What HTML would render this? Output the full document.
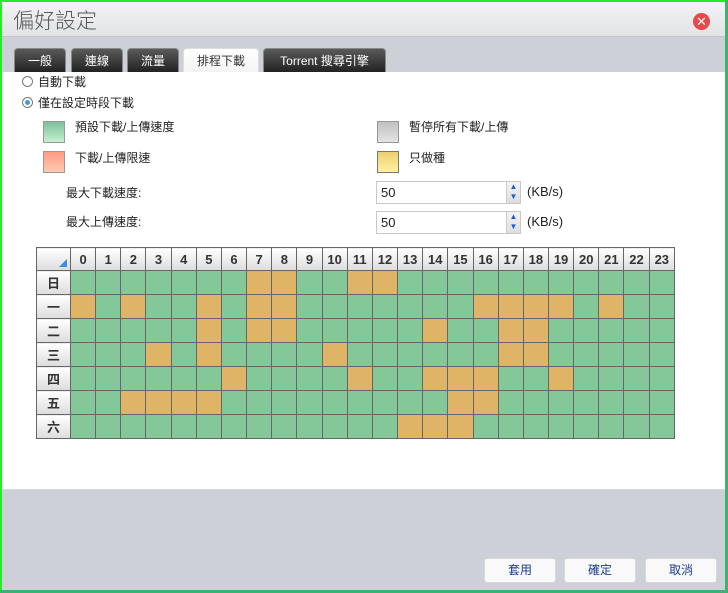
<!DOCTYPE html>
<html><head><meta charset="utf-8">
<style>
*{margin:0;padding:0;box-sizing:border-box}
body{width:728px;height:593px;overflow:hidden;position:relative;background:#fff;font-family:"Liberation Sans","Noto Sans CJK TC",sans-serif;font-size:12px;color:#222}
.abs{position:absolute}
#title{left:0;top:0;width:728px;height:37px;background:linear-gradient(#f4f4f6,#e2e3e6);border-bottom:1px solid #c4c6cb}
#title span{position:absolute;left:13px;top:5px;font-size:21px;color:#555;font-family:"Noto Sans CJK TC",sans-serif;font-weight:300}
#close{left:693px;top:13px;width:17px;height:17px;border-radius:50%;background:#e84848;color:#fff;font-size:13px;line-height:17px;text-align:center}
#band{left:0;top:37px;width:728px;height:35px;background:#cdd0d7}
.tab{position:absolute;top:48px;height:24px;border-radius:4px 4px 0 0;background:linear-gradient(#5a5a5a,#222);color:#fff;font-size:12px;text-align:center;line-height:24px;border:1px solid #888;border-bottom:none}
.tab.act{background:linear-gradient(#fff,#f4f4f4);color:#333;border-color:#ddd}
#foot{left:0;top:489px;width:728px;height:104px;background:#cdd0d7;border-top:1px solid #d8dade}
.btn{position:absolute;top:558px;width:72px;height:25px;background:#f9f9fa;border:1px solid #d6d8dc;border-radius:3px;color:#1a3a8a;text-align:center;line-height:23px;font-size:12px}
.radio{position:absolute;width:11px;height:11px;border:1px solid #777;border-radius:50%;background:#fff}
.radio.on::after{content:"";position:absolute;left:2px;top:2px;width:5px;height:5px;border-radius:50%;background:#3a9ae8}
.txt{position:absolute;font-size:12px;white-space:nowrap}
.sw{position:absolute;width:22px;height:22px;border:1px solid #999}
.inp{position:absolute;width:145px;height:23px;border:1px solid #c8c8c8;background:#fff;font-size:13px;padding-left:4px;line-height:21px}
.spin{position:absolute;right:0;top:0;width:14px;height:21px;background:linear-gradient(#f4f4f4,#ddd);border-left:1px solid #ccc;color:#1f5fd0;font-size:8px;line-height:10px;text-align:center}
#grid{position:absolute;left:36px;top:247px;border-collapse:collapse;table-layout:fixed;width:639px}
#grid td{border:1px solid #666;height:24px;padding:0}
#grid tr:first-child td{height:23px}
#grid .h{background:linear-gradient(#fff,#dcdcdc);font-weight:bold;text-align:center;color:#333;font-size:13px}
#grid .g{background:#84c89a}
#grid .o{background:#e0b466}
#lb{left:0;top:0;width:2px;height:593px;background:#22ee22}
#tb{left:0;top:0;width:728px;height:2px;background:#22ee22}
#rb{left:725px;top:0;width:3px;height:593px;background:#3cb371}
#bb{left:0;top:590px;width:728px;height:3px;background:#3cb371}
</style></head><body>
<div id="title" class="abs"><span>偏好設定</span></div>
<div id="close" class="abs">✕</div>
<div id="band" class="abs"></div>
<div class="tab" style="left:14px;width:52px">一般</div>
<div class="tab" style="left:71px;width:52px">連線</div>
<div class="tab" style="left:127px;width:52px">流量</div>
<div class="tab act" style="left:183px;width:76px">排程下載</div>
<div class="tab" style="left:263px;width:123px">Torrent 搜尋引擎</div>

<div class="radio" style="left:22px;top:76px"></div><div class="txt" style="left:38px;top:73px">自動下載</div>
<div class="radio on" style="left:22px;top:97px"></div><div class="txt" style="left:38px;top:94px">僅在設定時段下載</div>

<div class="sw" style="left:43px;top:121px;background:linear-gradient(#7cc09a,#c8f0d0)"></div><div class="txt" style="left:75px;top:118px">預設下載/上傳速度</div>
<div class="sw" style="left:43px;top:151px;background:linear-gradient(#ff9c84,#ffcab0)"></div><div class="txt" style="left:75px;top:149px">下載/上傳限速</div>
<div class="sw" style="left:377px;top:121px;background:linear-gradient(#c0c0c0,#e4e4e4)"></div><div class="txt" style="left:409px;top:118px">暫停所有下載/上傳</div>
<div class="sw" style="left:377px;top:151px;border-color:#777;background:linear-gradient(#ecd070,#fff0a0)"></div><div class="txt" style="left:409px;top:149px">只做種</div>

<div class="txt" style="left:66px;top:184px">最大下載速度:</div>
<div class="txt" style="left:66px;top:213px">最大上傳速度:</div>
<div class="inp" style="left:376px;top:181px">50<div class="spin">▲<br>▼</div></div>
<div class="inp" style="left:376px;top:211px">50<div class="spin">▲<br>▼</div></div>
<div class="txt" style="left:527px;top:184px;font-size:13px">(KB/s)</div>
<div class="txt" style="left:527px;top:214px;font-size:13px">(KB/s)</div>

<table id="grid">
<colgroup><col style="width:34px"></colgroup>
<tr><td class="h" style="position:relative"><svg style="position:absolute;right:3px;bottom:3px" width="8" height="8"><polygon points="8,0 8,8 0,8" fill="#3a8ee6"/></svg></td>
<td class="h">0</td><td class="h">1</td><td class="h">2</td><td class="h">3</td><td class="h">4</td><td class="h">5</td><td class="h">6</td><td class="h">7</td><td class="h">8</td><td class="h">9</td><td class="h">10</td><td class="h">11</td><td class="h">12</td><td class="h">13</td><td class="h">14</td><td class="h">15</td><td class="h">16</td><td class="h">17</td><td class="h">18</td><td class="h">19</td><td class="h">20</td><td class="h">21</td><td class="h">22</td><td class="h">23</td></tr>
<tr><td class="h">日</td><td class="g"></td><td class="g"></td><td class="g"></td><td class="g"></td><td class="g"></td><td class="g"></td><td class="g"></td><td class="o"></td><td class="o"></td><td class="g"></td><td class="g"></td><td class="o"></td><td class="o"></td><td class="g"></td><td class="g"></td><td class="g"></td><td class="g"></td><td class="g"></td><td class="g"></td><td class="g"></td><td class="g"></td><td class="g"></td><td class="g"></td><td class="g"></td></tr>
<tr><td class="h">一</td><td class="o"></td><td class="g"></td><td class="o"></td><td class="g"></td><td class="g"></td><td class="o"></td><td class="g"></td><td class="o"></td><td class="o"></td><td class="g"></td><td class="g"></td><td class="g"></td><td class="g"></td><td class="g"></td><td class="g"></td><td class="g"></td><td class="o"></td><td class="o"></td><td class="o"></td><td class="o"></td><td class="g"></td><td class="o"></td><td class="g"></td><td class="g"></td></tr>
<tr><td class="h">二</td><td class="g"></td><td class="g"></td><td class="g"></td><td class="g"></td><td class="g"></td><td class="o"></td><td class="g"></td><td class="o"></td><td class="o"></td><td class="g"></td><td class="g"></td><td class="g"></td><td class="g"></td><td class="g"></td><td class="o"></td><td class="g"></td><td class="g"></td><td class="o"></td><td class="o"></td><td class="g"></td><td class="g"></td><td class="g"></td><td class="g"></td><td class="g"></td></tr>
<tr><td class="h">三</td><td class="g"></td><td class="g"></td><td class="g"></td><td class="o"></td><td class="g"></td><td class="o"></td><td class="g"></td><td class="g"></td><td class="g"></td><td class="g"></td><td class="o"></td><td class="g"></td><td class="g"></td><td class="g"></td><td class="g"></td><td class="g"></td><td class="g"></td><td class="o"></td><td class="o"></td><td class="g"></td><td class="g"></td><td class="g"></td><td class="g"></td><td class="g"></td></tr>
<tr><td class="h">四</td><td class="g"></td><td class="g"></td><td class="g"></td><td class="g"></td><td class="g"></td><td class="g"></td><td class="o"></td><td class="g"></td><td class="g"></td><td class="g"></td><td class="g"></td><td class="o"></td><td class="g"></td><td class="g"></td><td class="o"></td><td class="o"></td><td class="o"></td><td class="g"></td><td class="g"></td><td class="o"></td><td class="g"></td><td class="g"></td><td class="g"></td><td class="g"></td></tr>
<tr><td class="h">五</td><td class="g"></td><td class="g"></td><td class="o"></td><td class="o"></td><td class="o"></td><td class="o"></td><td class="g"></td><td class="g"></td><td class="g"></td><td class="g"></td><td class="g"></td><td class="g"></td><td class="g"></td><td class="g"></td><td class="g"></td><td class="o"></td><td class="o"></td><td class="g"></td><td class="g"></td><td class="g"></td><td class="g"></td><td class="g"></td><td class="g"></td><td class="g"></td></tr>
<tr><td class="h">六</td><td class="g"></td><td class="g"></td><td class="g"></td><td class="g"></td><td class="g"></td><td class="g"></td><td class="g"></td><td class="g"></td><td class="g"></td><td class="g"></td><td class="g"></td><td class="g"></td><td class="g"></td><td class="o"></td><td class="o"></td><td class="o"></td><td class="g"></td><td class="g"></td><td class="g"></td><td class="g"></td><td class="g"></td><td class="g"></td><td class="g"></td><td class="g"></td></tr>
</table>

<div id="foot" class="abs"></div>
<div class="btn" style="left:484px">套用</div>
<div class="btn" style="left:564px">確定</div>
<div class="btn" style="left:645px">取消</div>

<div id="lb" class="abs"></div><div id="tb" class="abs"></div><div id="rb" class="abs"></div><div id="bb" class="abs"></div>
</body></html>
